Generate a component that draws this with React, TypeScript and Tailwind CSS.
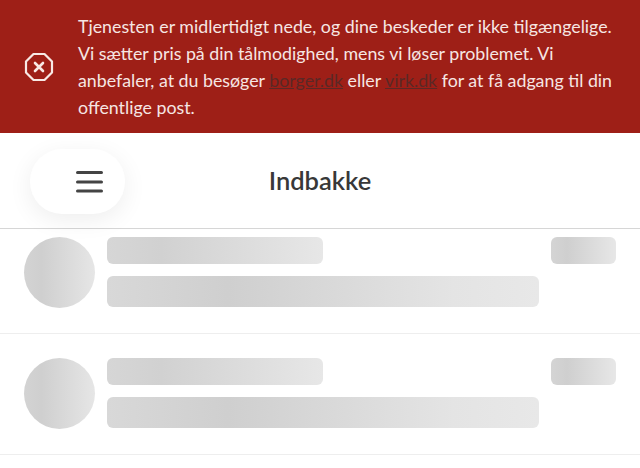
import React from 'react';

const SkeletonRow: React.FC<{ first?: boolean }> = ({ first }) => (
  <div className={`flex border-b border-[#eeeeee] pl-6 pr-6 pb-[25px] ${first ? 'pt-2' : 'pt-6'}`}>
    <div className="h-[71px] w-[71px] shrink-0 rounded-full bg-[linear-gradient(90deg,#d3d3d3_0%,#cfcfcf_25%,#e6e6e6_100%)]" />
    <div className="ml-3 flex flex-1 justify-between">
      <div className="flex w-[432px] flex-col gap-3">
        <div className="h-[27px] w-[216px] rounded-md bg-[linear-gradient(90deg,#d6d6d6_0%,#d1d1d1_25%,#e7e7e7_100%)]" />
        <div className="h-[31px] w-full rounded-md bg-[linear-gradient(90deg,#d8d8d8_0%,#cfcfcf_28%,#e4e4e4_80%,#e8e8e8_100%)]" />
      </div>
      <div className="h-[27px] w-[65px] rounded-md bg-[linear-gradient(90deg,#d4d4d4_0%,#cfcfcf_25%,#e7e7e7_100%)]" />
    </div>
  </div>
);

const App: React.FC = () => {
  return (
    <div className="h-[468px] w-[640px] overflow-hidden bg-white font-['Lato','Liberation_Sans',sans-serif]">
      <div className="flex h-[133px] items-center bg-[#9e1f17] pl-6 pr-5">
        <svg width="30" height="30" viewBox="0 0 30 30" fill="none" stroke="#f8e9e5" strokeWidth="2.2" className="mr-[24px] shrink-0">
          <path d="M9.500 2h11L28 9.500v11L20.500 28h-11L2 20.500v-11z" strokeLinejoin="round" />
          <path d="M11 11l8 8M19 11l-8 8" strokeWidth="2.6" strokeLinecap="round" />
        </svg>
        <p className="pt-[1px] text-[17.800px] leading-[27px] text-[#f6e6e3] [font-variant-ligatures:common-ligatures]">
          Tjenesten er midlertidigt nede, og dine beskeder er ikke tilgængelige. Vi sætter pris på din tålmodighed, mens vi løser problemet. Vi anbefaler, at du besøger{' '}
          <a href="#" className="text-[#5a2826] underline">borger.dk</a> eller{' '}
          <a href="#" className="text-[#5a2826] underline">virk.dk</a> for at få adgang til din offentlige post.
        </p>
      </div>

      <div className="grid h-[96px] grid-cols-[1fr_auto_1fr] items-center border-b border-[#d6d6d6]">
        <button className="ml-[30px] mt-[1px] flex h-[65px] w-[95px] items-center justify-start rounded-[32px] bg-white pl-[46px] shadow-[0_6px_24px_rgba(0,0,0,0.07)]">
          <svg width="27" height="24" viewBox="0 0 27 24" stroke="#444444" strokeWidth="3" strokeLinecap="round">
            <path d="M1.500 3.500h24M1.500 13h24M1.500 22h24" />
          </svg>
        </button>
        <h1 className="text-[25.500px] font-semibold text-[#383838]">Indbakke</h1>
        <div />
      </div>

      <SkeletonRow first />
      <SkeletonRow />
    </div>
  );
};

export default App;
